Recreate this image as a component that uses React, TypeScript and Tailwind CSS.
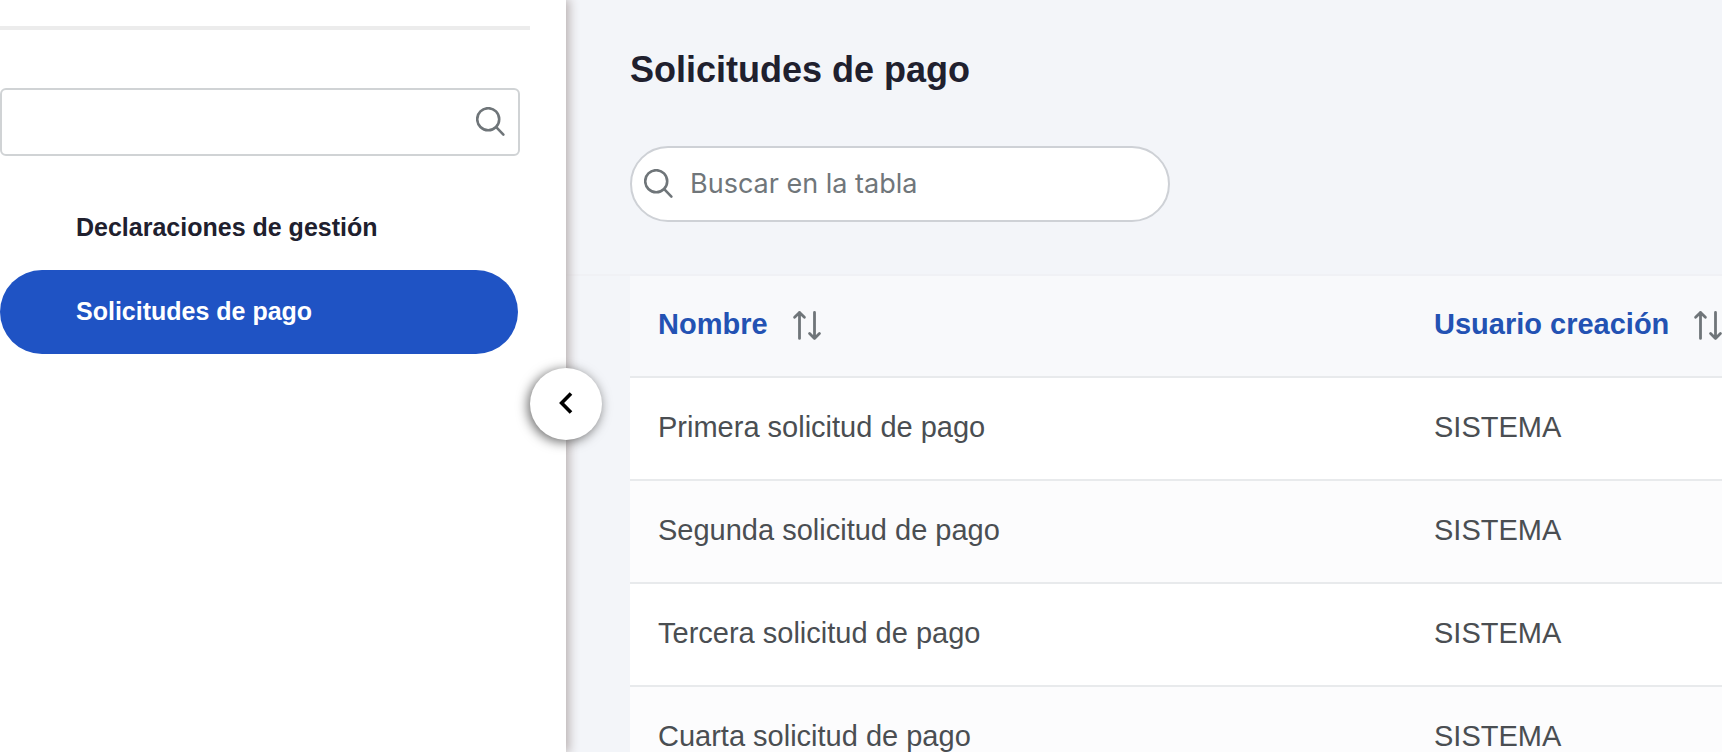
import { useState } from "react";

const menuItems = ["Declaraciones de gestión", "Solicitudes de pago"];

const rows = [
  { name: "Primera solicitud de pago", user: "SISTEMA" },
  { name: "Segunda solicitud de pago", user: "SISTEMA" },
  { name: "Tercera solicitud de pago", user: "SISTEMA" },
  { name: "Cuarta solicitud de pago", user: "SISTEMA" },
];

function SearchIcon() {
  return (
    <svg className="h-[30px] w-[30px] shrink-0" viewBox="0 0 30 30" fill="none" stroke="#6f7579" strokeWidth="2.6" strokeLinecap="round" aria-hidden="true">
      <circle cx="12.2" cy="12.2" r="11" />
      <path d="M20.2 20.2 27.4 27.6" />
    </svg>
  );
}

function SortIcon() {
  return (
    <svg className="h-[30px] w-[30px] shrink-0" viewBox="0 0 30 30" fill="none" stroke="#6f7579" strokeWidth="2.8" strokeLinecap="round" strokeLinejoin="round" aria-hidden="true">
      <path d="M7.5 28.4V2.4M2.6 7.2l4.9-4.8 4.9 4.8" />
      <path d="M22.5 2.4v26M17.6 23.6l4.9 4.8 4.9-4.8" />
    </svg>
  );
}

function SortHeader({ label }: { label: string }) {
  return (
    <button type="button" className="flex items-center gap-6 font-bold whitespace-nowrap">
      {label}
      <SortIcon />
    </button>
  );
}

export default function App() {
  const [active, setActive] = useState("Solicitudes de pago");

  return (
    <div className="flex h-screen overflow-hidden bg-[#f3f5f9] font-['Liberation_Sans',Arial,sans-serif]">
      {/* Sidebar */}
      <aside className="relative z-10 w-[566px] shrink-0 bg-white shadow-[2px_0_10px_1px_#b8afaf]">
        <hr className="mt-[26px] mr-9 border-t-4 border-[#ececec]" />

        <label className="mt-[58px] mr-[46px] flex h-[68px] items-center rounded-md border-2 border-[#d0d3d5] pr-3">
          <input type="text" aria-label="Buscar en el menú" className="h-full min-w-0 flex-1 px-4 text-[29px] outline-none" />
          <SearchIcon />
        </label>

        <nav className="mt-[30px] mr-12">
          {menuItems.map((item) => (
            <a
              key={item}
              href="#"
              onClick={() => setActive(item)}
              className={
                "flex h-[84px] items-center rounded-full pl-[76px] text-[25px] font-bold " +
                (item === active ? "bg-[#1f53c4] text-white" : "text-[#20202e]")
              }
            >
              {item}
            </a>
          ))}
        </nav>

        {/* Collapse button */}
        <button
          type="button"
          aria-label="Contraer menú"
          className="absolute top-[368px] -right-9 flex size-[72px] items-center justify-center rounded-full bg-white pb-0.5 shadow-[-2px_2px_12px_#666]"
        >
          <svg className="h-[22px] w-[14px]" viewBox="0 0 14 22" fill="none" stroke="#000" strokeWidth="3.6" aria-hidden="true">
            <path d="M12 1.4 2.6 11 12 20.6" />
          </svg>
        </button>
      </aside>

      {/* Content */}
      <main className="min-w-0 flex-1 overflow-hidden">
        <header className="border-b-2 border-[#f0f1f5] pt-[46px] pb-[52px] pl-16">
          <h1 className="text-4xl leading-[48px] font-bold text-[#20202e]">Solicitudes de pago</h1>
          <label className="mt-[52px] flex h-[76px] w-[540px] max-w-full items-center gap-4 rounded-full border-2 border-[#ced1d6] bg-white pl-3">
            <SearchIcon />
            <input
              type="search"
              placeholder="Buscar en la tabla"
              aria-label="Buscar en la tabla"
              className="min-w-0 flex-1 font-[Inter,sans-serif] text-[27px] outline-none placeholder:text-[#70767a]"
            />
          </label>
        </header>

        <div className="ml-16 overflow-hidden">
          <table className="w-full border-separate border-spacing-0 text-left text-[29px] text-[#4a4e52]">
            <thead className="bg-[#f8f9fb] text-[#2352b3]">
              <tr className="h-[102px]">
                <th className="min-w-[776px] border-b-2 border-[#e8eaec] pb-0.5 pl-7">
                  <SortHeader label="Nombre" />
                </th>
                <th className="border-b-2 border-[#e8eaec] pr-7 pb-0.5 pl-7">
                  <SortHeader label="Usuario creación" />
                </th>
              </tr>
            </thead>
            <tbody>
              {rows.map((row) => (
                <tr key={row.name} className="h-[103px] bg-white even:bg-[#fcfcfd]">
                  <td className="border-b-2 border-[#e8eaec] pb-0.5 pl-7">{row.name}</td>
                  <td className="border-b-2 border-[#e8eaec] pb-0.5 pl-7">{row.user}</td>
                </tr>
              ))}
            </tbody>
          </table>
        </div>
      </main>
    </div>
  );
}
